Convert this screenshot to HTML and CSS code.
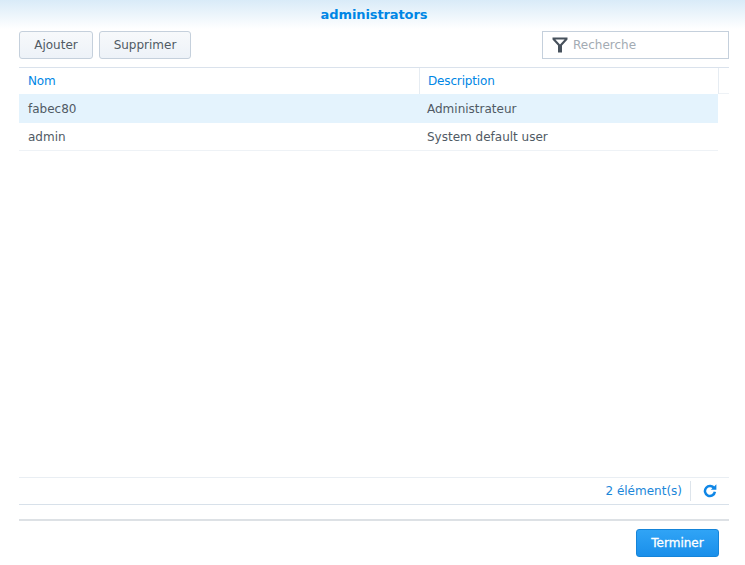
FILE: index.html
```html
<!DOCTYPE html>
<html lang="fr">
<head>
<meta charset="utf-8">
<title>administrators</title>
<link rel="stylesheet" href="styles.css">
</head>
<body>
<div class="window">
  <header class="title">administrators</header>
  <div class="toolbar">
    <button class="btn">Ajouter</button>
    <button class="btn btn-wide">Supprimer</button>
    <div class="search">
      <svg class="funnel" width="16" height="16" viewBox="0 0 16 16"><path d="M0.5 0.5H15.5V2.5L10 8.5V15.5H6V8.5L0.5 2.5ZM3.4 2.4L8 7.6L12.6 2.4Z" fill="#47515c" fill-rule="evenodd"/></svg>
      <span class="placeholder">Recherche</span>
    </div>
  </div>
  <div class="grid">
    <div class="grid-head">
      <div class="col-name">Nom</div>
      <div class="col-desc">Description</div>
      <div class="col-end"></div>
    </div>
    <div class="row row-selected"><div class="cell-name">fabec80</div><div class="cell-desc">Administrateur</div></div>
    <div class="row"><div class="cell-name">admin</div><div class="cell-desc">System default user</div></div>
  </div>
  <div class="pager">
    <span class="count">2 élément(s)</span>
    <span class="pager-sep"></span>
    <svg class="refresh" width="14" height="14" viewBox="0 0 14 14"><path d="M11.2 4.4A5 5 0 1 0 11.9 7.8" fill="none" stroke="#0f86e6" stroke-width="2.5"/><path d="M7.8 5.8H13.4V0.2Z" fill="#0f86e6"/></svg>
  </div>
  <div class="footer">
    <button class="btn-primary">Terminer</button>
  </div>
</div>
</body>
</html>
```
FILE: styles.css
```css
html, body {
  margin: 0;
  padding: 0;
  background: #fff;
}
.window {
  width: 745px;
  height: 565px;
  display: flex;
  flex-direction: column;
  font-family: "DejaVu Sans", sans-serif;
  font-size: 12px;
  color: #505a64;
  overflow: hidden;
}
.title {
  height: 29px;
  line-height: 29px;
  padding-left: 3px;
  text-align: center;
  font-weight: bold;
  font-size: 13px;
  letter-spacing: -0.1px;
  color: #0086e5;
  background: linear-gradient(#d9ebf8, #ffffff);
  flex: none;
}
.toolbar {
  display: flex;
  gap: 6px;
  margin: 2px 16px 0 19px;
  height: 28px;
  flex: none;
}
.btn {
  width: 74px;
  height: 28px;
  padding: 0;
  font: inherit;
  color: #505a64;
  border: 1px solid #c5d0dc;
  border-radius: 3px;
  background: linear-gradient(#f7f9fb, #edf2f8);
}
.btn-wide {
  width: 92px;
}
.search {
  margin-left: auto;
  width: 187px;
  box-sizing: border-box;
  border: 1px solid #c5d0dc;
  display: flex;
  align-items: center;
  gap: 5px;
  padding-left: 9px;
}
.funnel {
  flex: none;
}
.placeholder {
  color: #a3abb3;
}
.grid {
  flex: 1;
  margin: 8px 16px 0 19px;
  border-top: 1px solid #dae2ec;
}
.grid-head {
  display: flex;
  height: 26px;
  line-height: 27px;
  color: #0086e5;
  letter-spacing: -0.15px;
}
.col-name {
  width: 401px;
  padding-left: 9px;
  box-sizing: border-box;
  border-right: 1px solid #e6ecf2;
}
.col-desc {
  width: 299px;
  padding-left: 8px;
  box-sizing: border-box;
  border-right: 1px solid #e6ecf2;
}
.col-end {
  flex: 1;
  border-bottom: 1px solid #eef2f6;
}
.row {
  display: flex;
  width: 699px;
  height: 27px;
  line-height: 28px;
  border-bottom: 1px solid #eef2f6;
}
.row-selected {
  height: 29px;
  box-sizing: border-box;
  padding-top: 1px;
  line-height: 28px;
  border-bottom: 0;
  background: #e4f3fd;
}
.cell-name {
  width: 400px;
  padding-left: 9px;
  box-sizing: border-box;
}
.cell-desc {
  flex: 1;
  padding-left: 8px;
}
.pager {
  margin: 0 16px 0 19px;
  height: 26px;
  border-top: 1px solid #e9eef3;
  border-bottom: 1px solid #d8e1ea;
  display: flex;
  align-items: center;
  justify-content: flex-end;
  flex: none;
}
.count {
  color: #1a86d9;
  margin-top: -1px;
}
.pager-sep {
  width: 1px;
  height: 20px;
  background: #dde4eb;
  margin: 0 12px 0 8px;
}
.refresh {
  margin-right: 12px;
}
.footer {
  margin: 14px 16px 0 19px;
  height: 46px;
  box-sizing: border-box;
  border-top: 2px solid #dde1e5;
  padding: 8px 10px 0 0;
  display: flex;
  justify-content: flex-end;
  flex: none;
}
.btn-primary {
  width: 83px;
  height: 28px;
  padding: 0;
  font: inherit;
  -webkit-text-stroke: 0.3px #fff;
  color: #fff;
  border: 1px solid #1584d9;
  border-radius: 3px;
  background: linear-gradient(#30a4f6, #1a8fea);
}
```
